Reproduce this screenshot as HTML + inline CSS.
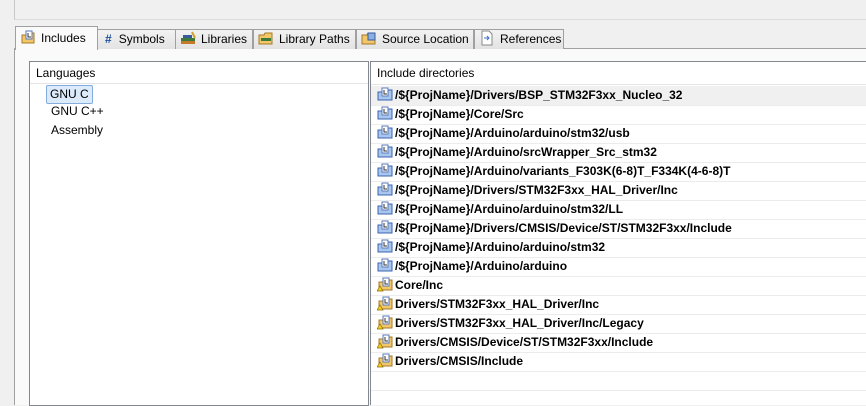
<!DOCTYPE html><html><head><style>
body{margin:0;width:866px;height:404px;overflow:hidden;background:#f0f0f0;font-family:"Liberation Sans",sans-serif;font-size:12px;color:#000;position:relative}
.a{position:absolute}
.tab{position:absolute;top:29px;height:19px;border:1px solid #a0a0a0;border-bottom:none;background:linear-gradient(#f2f2f2,#e3e3e3);line-height:19px;padding-left:4px;white-space:nowrap;font-size:12px}
.tab svg{vertical-align:-3px;margin-right:5px}
.row{position:absolute;left:0;right:0;height:19px;border-bottom:1px solid #ececec;line-height:18px;font-weight:bold;white-space:nowrap;padding-left:6px}
.row svg{vertical-align:-3px;margin-right:2px}
</style></head><body>
<div class="a" style="left:14px;top:0;width:852px;height:19px;border-left:1px solid #c8c8c8;border-bottom:1px solid #dcdcdc;background:#f0f0f0"></div>
<div class="a" style="left:14px;top:48px;width:852px;height:356px;border-left:1px solid #a0a0a0;border-top:1px solid #a0a0a0;background:#fafafa"></div>
<div class="tab" style="left:15px;top:26px;width:77px;height:23px;background:#fafafa;z-index:2;line-height:22px"><svg width="16" height="16"><path d="M2 6h5l1-2h6v10H2z" fill="#f2c76a" stroke="#a57a2a"/><path d="M6 2h6v8H6z" fill="#fff" stroke="#5a79b8"/><path d="M8 4v4h3" stroke="#333" fill="none"/></svg>Includes</div>
<div class="tab" style="left:97px;width:73px"><span style="color:#1d4f9a;font-weight:bold;margin:0 7px 0 3px">#</span>Symbols</div>
<div class="tab" style="left:175px;width:72px"><svg width="16" height="16"><rect x="1" y="8" width="14" height="3" fill="#3a7a3a"/><rect x="1" y="11" width="14" height="3" fill="#c47a2a"/><rect x="3" y="5" width="9" height="3" fill="#3a5aa0"/><path d="M12 2l3 6" stroke="#d0a030" stroke-width="2"/></svg>Libraries</div>
<div class="tab" style="left:253px;width:97px"><svg width="16" height="16"><path d="M1 5h5l1-2h7v11H1z" fill="#f2c76a" stroke="#a57a2a"/><rect x="3" y="8" width="10" height="3" fill="#3a7a3a"/></svg>Library Paths</div>
<div class="tab" style="left:356px;width:112px"><svg width="16" height="16"><path d="M1 5h5l1-2h7v11H1z" fill="#f2c76a" stroke="#a57a2a"/><rect x="7" y="3" width="7" height="7" fill="#8ab0e0" stroke="#3a5aa0"/></svg>Source Location</div>
<div class="tab" style="left:474px;width:84px"><svg width="16" height="16"><path d="M3 1h7l3 3v11H3z" fill="#fff" stroke="#888"/><path d="M5 8h5M8 6l2 2-2 2" stroke="#3a70c0" fill="none"/></svg>References</div>
<div class="a" style="left:29px;top:61px;width:338px;height:343px;border:1px solid #828790;background:#fff">
<div class="a" style="left:0;top:0;right:0;height:21px;border-bottom:1px solid #e5e5e5;background:#fff;line-height:22px;padding-left:6px">Languages</div>
<div class="a" style="left:16px;top:23px;height:17px;border:1px solid #84acdd;border-radius:2px;background:#dcebfc;line-height:17px;padding:0 3px;white-space:nowrap">GNU C</div>
<div class="a" style="left:21px;top:42px">GNU C++</div>
<div class="a" style="left:21px;top:61px">Assembly</div>
</div>
<div class="a" style="left:370px;top:61px;width:496px;height:343px;border-left:1px solid #828790;border-top:1px solid #828790;background:#fff" id="r">
<div class="a" style="left:0;top:0;right:0;height:22px;border-bottom:1px solid #e5e5e5;line-height:23px;padding-left:6px">Include directories</div>
</div>
<script>
var w=["/${ProjName}/Drivers/BSP_STM32F3xx_Nucleo_32","/${ProjName}/Core/Src","/${ProjName}/Arduino/arduino/stm32/usb","/${ProjName}/Arduino/srcWrapper_Src_stm32","/${ProjName}/Arduino/variants_F303K(6-8)T_F334K(4-6-8)T","/${ProjName}/Drivers/STM32F3xx_HAL_Driver/Inc","/${ProjName}/Arduino/arduino/stm32/LL","/${ProjName}/Drivers/CMSIS/Device/ST/STM32F3xx/Include","/${ProjName}/Arduino/arduino/stm32","/${ProjName}/Arduino/arduino","Core/Inc","Drivers/STM32F3xx_HAL_Driver/Inc","Drivers/STM32F3xx_HAL_Driver/Inc/Legacy","Drivers/CMSIS/Device/ST/STM32F3xx/Include","Drivers/CMSIS/Include"];
var r=document.getElementById('r'),h='';
w.forEach(function(t,i){var ws=i<10;
var ic=ws?'<svg width="16" height="16"><path d="M1 6h5l1-2h8v10H1z" fill="#a9c6ee" stroke="#3a64b0"/><path d="M5 2h6v8H5z" fill="#fff" stroke="#5a79b8"/><path d="M7 4v4h3" stroke="#333" fill="none"/></svg>':'<svg width="16" height="16"><path d="M2 6h5l1-2h7v10H2z" fill="#f2c76a" stroke="#a57a2a"/><path d="M6 2h6v8H6z" fill="#fff" stroke="#5a79b8"/><path d="M8 4v4h3" stroke="#333" fill="none"/><path d="M3 10l3 5H0z" fill="#f5d020" stroke="#8a6a00" stroke-width=".7"/></svg>';
h+='<div class="row" style="top:'+(24+i*19)+'px;'+(i==0?'background:#f0f0f0;':'')+'">'+ic+t+'</div>';});
h+='<div class="row" style="top:309px"></div>';
r.innerHTML+=h;
</script>
</body></html>
